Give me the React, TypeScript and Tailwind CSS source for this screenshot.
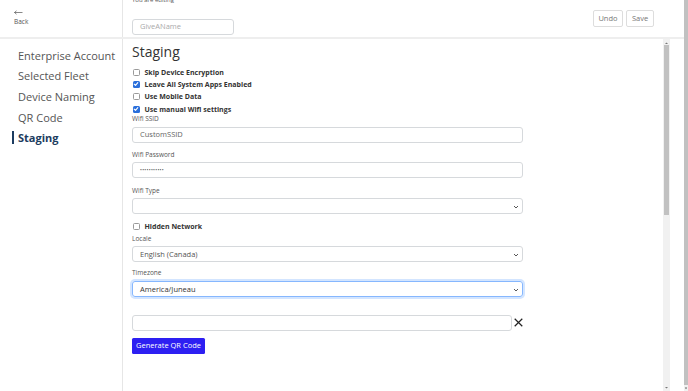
import React from "react";

const Check = ({ checked }: { checked?: boolean }) =>
  checked ? (
    <span className="w-[7px] h-[7px] rounded-[1.5px] bg-[#2a6fdb] flex items-center justify-center shrink-0">
      <svg width="6" height="6" viewBox="0 0 10 10">
        <path d="M2 5.2 L4.2 7.3 L8 2.8" fill="none" stroke="white" strokeWidth="1.8" strokeLinecap="round" strokeLinejoin="round" />
      </svg>
    </span>
  ) : (
    <span className="w-[7px] h-[7px] rounded-[1.5px] border border-[#9a9a9a] bg-white shrink-0" />
  );

const CheckRow = ({ label, checked }: { label: string; checked?: boolean }) => (
  <div className="h-[12.3px] flex items-center gap-[5px] pl-[0.5px]">
    <Check checked={checked} />
    <span className="text-[7px] font-bold text-[#333] leading-none">{label}</span>
  </div>
);

const Label = ({ text, className = "" }: { text: string; className?: string }) => (
  <div className={"h-[8px] leading-[8px] text-[6.5px] text-[#555] " + className}>{text}</div>
);

const Chevron = () => (
  <svg width="6" height="4" viewBox="0 0 6 4" className="absolute right-[3px] top-[6px]">
    <path d="M1 1 L3 3 L5 1" fill="none" stroke="#444" strokeWidth="0.9" />
  </svg>
);

const Input = ({ text, color = "#666", focus, select, className = "" }: { text?: string; color?: string; focus?: boolean; select?: boolean; className?: string }) => (
  <div
    className={
      "relative h-[16px] rounded-[3px] border flex items-center pl-[7px] text-[7.5px] " +
      (focus ? "border-[#86b7fe] shadow-[0_0_0_2px_rgba(13,110,253,0.18)] " : "border-[#d6d9dc] ") +
      className
    }
    style={{ color }}
  >
    {text}
    {select && <Chevron />}
  </div>
);

export default function App() {
  const nav = ["Enterprise Account", "Selected Fleet", "Device Naming", "QR Code", "Staging"];
  return (
    <div className="w-[688px] h-[391px] overflow-hidden bg-white flex relative" style={{ fontFamily: '"Open Sans", "Noto Sans", sans-serif' }}>
      <div className="w-[684px] h-full flex flex-col">
        {/* header */}
        <div className="h-[39px] shrink-0 flex border-b-2 border-[#eeeeee]">
          <div className="w-[123px] shrink-0 border-r border-[#e6e6e6] pl-[14px] pt-[10px]">
            <svg width="9" height="5" viewBox="0 0 9 5" className="block">
              <path d="M0.5 2.5 L8.5 2.5 M0.5 2.5 L2.5 0.8 M0.5 2.5 L2.5 4.2" fill="none" stroke="#555" strokeWidth="0.7" />
            </svg>
            <div className="text-[6.5px] text-[#555] leading-[8px] mt-[3px]">Back</div>
          </div>
          <div className="flex-1 flex justify-between pl-[9px] pr-[30px]">
            <div>
              <div className="text-[6px] leading-[8px] text-[#555] -mt-[4px]">You are editing</div>
              <div className="mt-[15px] w-[102px] h-[16px] rounded-[3px] border border-[#d6d9dc] flex items-center pl-[7px] text-[7.5px] text-[#aaa]">
                GiveAName
              </div>
            </div>
            <div className="flex gap-[3px] pt-[10px]">
              <div className="w-[30px] h-[16.5px] rounded-[2px] border border-[#dddddd] flex items-center justify-center text-[7.5px] text-[#777]">Undo</div>
              <div className="w-[28px] h-[16.5px] rounded-[2px] border border-[#dddddd] flex items-center justify-center text-[7.5px] text-[#777]">Save</div>
            </div>
          </div>
        </div>
        {/* body */}
        <div className="flex-1 flex min-h-0">
          <div className="w-[123px] shrink-0 border-r border-[#e6e6e6] pt-[6px]">
            {nav.map((n) => {
              const active = n === "Staging";
              return (
                <div key={n} className="h-[20.6px] flex items-center ml-[12px]">
                  <span
                    className={
                      "border-l-2 pl-[4px] leading-[13px] text-[11px] " +
                      (active ? "border-[#1c3c60] text-[#1c3c60] font-bold" : "border-transparent text-[#555]")
                    }
                  >
                    {n}
                  </span>
                </div>
              );
            })}
          </div>
          <div className="flex-1 relative pl-[9px]">
            <div className="w-[391px]">
              <div className="pt-[5px] h-[21px] leading-[16px] text-[14px] text-[#333]">Staging</div>
              <div className="mt-[6px]">
                <CheckRow label="Skip Device Encryption" />
                <CheckRow label="Leave All System Apps Enabled" checked />
                <CheckRow label="Use Mobile Data" />
                <CheckRow label="Use manual Wifi settings" checked />
              </div>
              <Label text="Wifi SSID" />
              <Input text="CustomSSID" className="mt-[3.7px]" />
              <Label text="Wifi Password" className="mt-[8.2px]" />
              <Input text="•••••••••••" color="#555" className="mt-[3.2px] !text-[5px] tracking-[0.3px]" />
              <Label text="Wifi Type" className="mt-[8.3px]" />
              <Input select className="mt-[3.5px]" />
              <div className="mt-[6.7px]">
                <CheckRow label="Hidden Network" />
              </div>
              <Label text="Locale" className="mt-[1.5px]" />
              <Input select text="English (Canada)" color="#555" className="mt-[3.7px]" />
              <Label text="Timezone" className="mt-[6.8px]" />
              <Input select focus text="America/Juneau" color="#333" className="mt-[4.2px]" />
              <div className="mt-[17.3px] flex items-center">
                <div className="w-[380px] h-[16px] rounded-[3px] border border-[#d6d9dc]" />
                <svg width="9" height="9" viewBox="0 0 9 9" className="ml-[2.5px]">
                  <path d="M0.7 0.7 L8.3 8.3 M8.3 0.7 L0.7 8.3" stroke="#222" strokeWidth="1.2" />
                </svg>
              </div>
              <div className="mt-[7.6px] w-[73px] h-[16px] rounded-[1.5px] bg-[#2d1ff2] text-white text-[7.5px] flex items-center justify-center">
                Generate QR Code
              </div>
            </div>
            {/* inner scrollbar */}
            <div className="absolute left-[540px] top-0 bottom-0 w-[7px] bg-[#f1f1f1]">
              <svg width="7" height="4" viewBox="0 0 7 4" className="absolute top-[1.5px] left-0">
                <path d="M2 3 L3.5 1.5 L5 3 Z" fill="#777" />
              </svg>
              <div className="absolute left-[0.7px] right-[0.7px] top-[6px] h-[170px] bg-[#c1c1c1]" />
              <svg width="7" height="4" viewBox="0 0 7 4" className="absolute bottom-[1px] left-0">
                <path d="M2 1 L3.5 2.5 L5 1 Z" fill="#777" />
              </svg>
            </div>
          </div>
        </div>
      </div>
      {/* outer scrollbar */}
      <div className="w-[4px] h-full bg-[#f1f1f1] relative">
        <div className="absolute left-0 right-0 top-0 h-[385px] bg-[#c1c1c1]" />
        <svg width="4" height="3" viewBox="0 0 4 3" className="absolute bottom-[1px] left-0">
          <path d="M0.8 0.6 L2 2.2 L3.2 0.6 Z" fill="#666" />
        </svg>
      </div>
    </div>
  );
}
